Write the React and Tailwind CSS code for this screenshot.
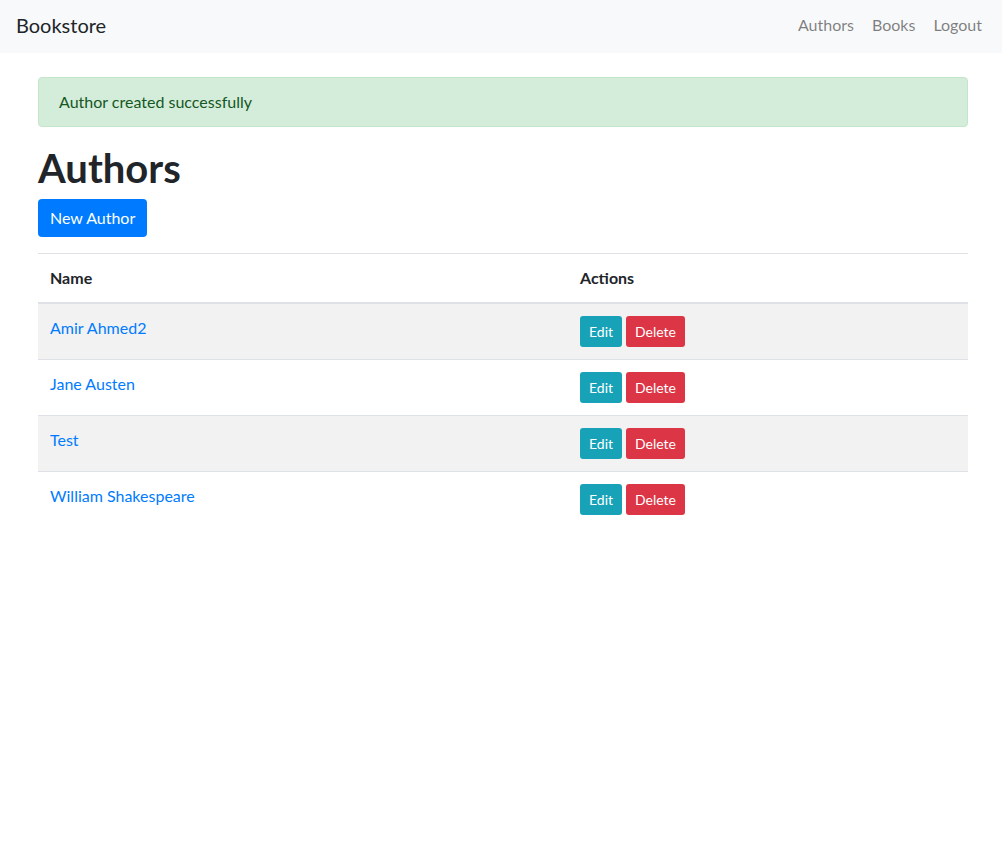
const authors = ["Amir Ahmed2", "Jane Austen", "Test", "William Shakespeare"];

export default function App() {
  return (
    <div className="min-h-[841px] bg-white text-[#212529] text-base leading-6 [font-family:Lato,'Noto_Sans',sans-serif]">
      <nav className="flex h-[53px] items-center justify-between bg-[#f8f9fa] pb-1 pl-4 pr-3">
        <a className="text-xl leading-[30px] text-[#212529]">Bookstore</a>
        <div className="flex gap-[2px]">
          <a className="px-2 py-2 text-black/50">Authors</a>
          <a className="px-2 py-2 text-black/50">Books</a>
          <a className="px-2 py-2 text-black/50">Logout</a>
        </div>
      </nav>

      <main className="ml-[38px] w-[930px]">
        <div className="mt-6 mb-4 rounded border border-[#c3e6cb] bg-[#d4edda] px-5 py-3 text-[#155724]">
          Author created successfully
        </div>

        <h1 className="mb-2 pt-[2px] text-[40px] font-bold leading-[46px]">Authors</h1>
        <button className="mb-4 h-[38px] rounded bg-[#007bff] px-3 text-base leading-6 text-white">
          New Author
        </button>

        <table className="w-full border-collapse">
          <thead>
            <tr>
              <th className="w-[530px] border-t border-b-2 border-[#dee2e6] p-3 text-left font-bold">Name</th>
              <th className="border-t border-b-2 border-[#dee2e6] p-3 text-left font-bold">Actions</th>
            </tr>
          </thead>
          <tbody>
            {authors.map((name, i) => (
              <tr key={name} className={i % 2 === 0 ? "bg-[#f2f2f2]" : ""}>
                <td className={`${i > 0 ? "border-t" : ""} border-[#dee2e6] p-3 align-top`}>
                  <a className="text-[#007bff]">{name}</a>
                </td>
                <td className={`${i > 0 ? "border-t" : ""} border-[#dee2e6] p-3 align-top`}>
                  <div className="flex gap-1">
                    <button className="h-[31px] rounded-[3px] bg-[#17a2b8] px-[9px] text-sm leading-[21px] text-white">Edit</button>
                    <button className="h-[31px] rounded-[3px] bg-[#dc3545] px-[9px] text-sm leading-[21px] text-white">Delete</button>
                  </div>
                </td>
              </tr>
            ))}
          </tbody>
        </table>
      </main>
    </div>
  );
}
